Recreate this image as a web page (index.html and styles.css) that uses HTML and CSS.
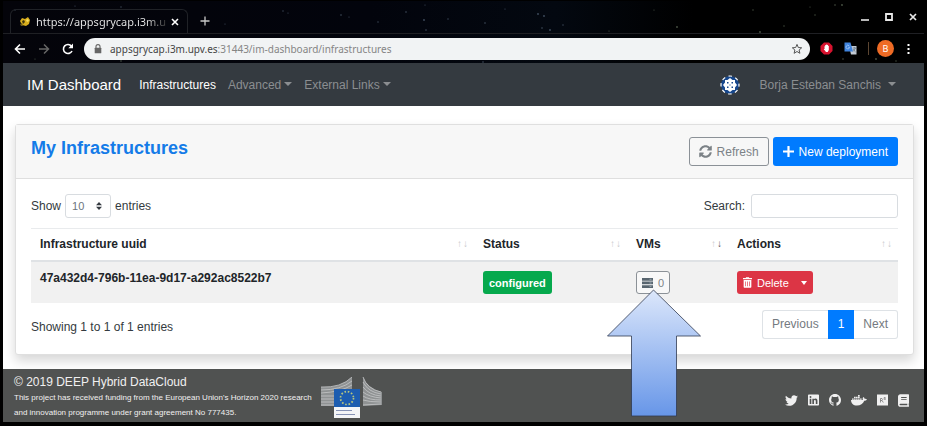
FILE: index.html
```html
<!DOCTYPE html>
<html lang="en">
<head>
<meta charset="utf-8">
<title>IM Dashboard</title>
<link rel="stylesheet" href="styles.css">
</head>
<body>
<div class="window">
  <div class="chrome">
    <svg class="stars" viewBox="0 0 921 62" preserveAspectRatio="none" aria-hidden="true">
      <g fill="#7488a0" opacity=".55">
        <circle cx="12" cy="9" r=".7"/><circle cx="72" cy="5" r=".6"/><circle cx="118" cy="6" r=".7"/><circle cx="222" cy="23" r=".6"/><circle cx="280" cy="10" r=".7"/><circle cx="285" cy="12" r=".6"/><circle cx="338" cy="14" r=".8"/><circle cx="346" cy="16" r=".6"/><circle cx="375" cy="21" r=".7"/><circle cx="403" cy="11" r=".8"/><circle cx="421" cy="19" r=".9"/><circle cx="423" cy="29" r=".8"/><circle cx="422" cy="4" r=".6"/><circle cx="445" cy="18" r=".7"/><circle cx="482" cy="22" r=".8"/><circle cx="502" cy="8" r=".6"/><circle cx="535" cy="13" r=".9"/><circle cx="541" cy="15" r=".9"/><circle cx="539" cy="27" r=".8"/><circle cx="547" cy="29" r=".9"/><circle cx="480" cy="61" r=".8"/><circle cx="560" cy="24" r=".7"/>
      </g>
      <g fill="#72806a" opacity=".65">
        <circle cx="606" cy="30" r=".6"/><circle cx="651" cy="9" r=".6"/><circle cx="674" cy="26" r=".9"/><circle cx="750" cy="9" r=".7"/><circle cx="757" cy="31" r=".9"/><circle cx="781" cy="25" r=".7"/><circle cx="807" cy="6" r=".6"/><circle cx="832" cy="4" r=".8"/><circle cx="839" cy="4" r=".9"/><circle cx="812" cy="14" r=".7"/><circle cx="840" cy="58" r=".8"/><circle cx="873" cy="58" r=".9"/><circle cx="893" cy="60" r=".7"/><circle cx="32" cy="58" r=".6"/><circle cx="118" cy="60" r=".8"/>
      </g>
    </svg>
    <div class="tabs">
      <div class="tab">
        <svg class="favicon" viewBox="0 0 12 12" aria-hidden="true"><path d="M1 5 3 2 6 3 9 1 11 4 10 8 7 10 3 9Z" fill="#d9ae1d"/><path d="M3 5 5 4 6 6 4 8Z" fill="#3f340d"/><path d="M7 4 9 3 10 5 8 6Z" fill="#f7e169"/><path d="M1 8 3 7 4 10 2 10Z" fill="#6b5a18"/></svg>
        <span class="tab-title">https://appsgrycap.i3m.u</span>
        <button class="bare" aria-label="Close tab"><svg width="8" height="8" viewBox="0 0 8 8"><path d="M1 1 7 7M7 1 1 7" stroke="#fff" stroke-width="1.6"/></svg></button>
      </div>
      <button class="bare" aria-label="New tab"><svg width="10" height="10" viewBox="0 0 10 10"><path d="M5 .5V9.500M.5 5H9.500" stroke="#c9c9c9" stroke-width="1.300"/></svg></button>
      <div class="controls">
        <button class="bare" aria-label="Minimize"><svg width="8" height="8" viewBox="0 0 8 8"><path d="M0 7H8" stroke="#e8e8e8" stroke-width="1.600"/></svg></button>
        <button class="bare" aria-label="Maximize"><svg width="8" height="8" viewBox="0 0 8 8"><path d="M1 1H7V7H1Z" fill="none" stroke="#e8e8e8" stroke-width="1.800"/></svg></button>
        <button class="bare" aria-label="Close"><svg width="8" height="8" viewBox="0 0 8 8"><path d="M1 1 7 7M7 1 1 7" stroke="#e8e8e8" stroke-width="1.700"/></svg></button>
      </div>
    </div>
    <div class="toolbar">
      <div class="history">
        <button class="bare" aria-label="Back"><svg width="12" height="12" viewBox="0 0 12 12"><path d="M11 6H2M6 1.500 1.500 6 6 10.500" fill="none" stroke="#fff" stroke-width="1.600"/></svg></button>
        <button class="bare" aria-label="Forward"><svg width="12" height="12" viewBox="0 0 12 12"><path d="M1 6H10M6 1.500 10.500 6 6 10.500" fill="none" stroke="#666" stroke-width="1.500"/></svg></button>
        <button class="bare" aria-label="Reload"><svg width="12" height="12" viewBox="0 0 12 12"><path d="M10 8A4.500 4.500 0 1 1 9.500 3.200" fill="none" stroke="#fff" stroke-width="1.600"/><path d="M11 .5V5.300H6.300Z" fill="#fff"/></svg></button>
      </div>
      <div class="address">
        <svg width="8" height="10" viewBox="0 0 8 10" aria-hidden="true"><path d="M2 4V2.600A2 2 0 0 1 6 2.600V4" fill="none" stroke="#666" stroke-width="1.100"/><rect x=".7" y="3.700" width="6.600" height="5.600" rx=".6" fill="#666"/></svg>
        <span class="url">appsgrycap.i3m.upv.es<span class="path">:31443/im-dashboard/infrastructures</span></span>
        <button class="bare" aria-label="Bookmark"><svg width="12" height="12" viewBox="0 0 12 12"><path d="M6 1.400 7.300 4.500 10.700 4.800 8.100 7 8.900 10.300 6 8.500 3.100 10.300 3.900 7 1.300 4.800 4.700 4.500Z" fill="none" stroke="#555"/></svg></button>
      </div>
      <div class="extensions">
        <svg width="13" height="13" viewBox="0 0 13 13" aria-hidden="true"><path d="M4 .5H9L12.500 4V9L9 12.500H4L.5 9V4Z" fill="#d8132f"/><path d="M4.500 6V4.300h.7V3h1v-.6h1V3h.9v1h.7v4L7.700 10H6L3.800 7.200 4.300 6.600l1 .7Z" fill="#fff"/></svg>
        <svg width="13" height="13" viewBox="0 0 13 13" aria-hidden="true"><path d="M5 4H12.500V12.500H7Z" fill="#c3cbd4"/><path d="M.5 .5H6.500L9 9.500H.5Z" fill="#3f83dd"/><path d="M5.200 3.900A1.800 1.800 0 1 0 5.600 5.300H4.200" fill="none" stroke="#a9cbf5" stroke-width=".8"/><path d="M8.800 6H12M10.400 5.200V6M11.300 6Q10.500 8.500 9 9.500M9.400 7Q10 9 11.600 10" fill="none" stroke="#5f7183" stroke-width=".7"/></svg>
        <span class="divider"></span>
        <span class="avatar">B</span>
        <button class="bare" aria-label="Menu"><svg width="3" height="10" viewBox="0 0 3 10"><path d="M.5 0h2v2h-2ZM.5 4h2v2h-2ZM.5 8h2v2h-2Z" fill="#fff"/></svg></button>
      </div>
    </div>
  </div>

  <nav class="navbar">
    <a class="brand" href="#">IM Dashboard</a>
    <a class="nav-link active" href="#">Infrastructures</a>
    <a class="nav-link caret" href="#">Advanced</a>
    <a class="nav-link caret" href="#">External Links</a>
    <svg class="identicon" viewBox="0 0 20 20" aria-hidden="true"><circle cx="10" cy="10" r="9" fill="#17478c"/><circle cx="10" cy="10" r="9" fill="none" stroke="#fff" stroke-width="1.200" stroke-dasharray="3.500 3.568" stroke-dashoffset="1.750"/><path d="M10 3 12.500 5H15V7.500L17 10 15 12.500V15H12.500L10 17 7.500 15H5V12.500L3 10 5 7.500V5H7.500Z" fill="#fff"/><path d="M7 7h1.500v1.500H7ZM11.500 7H13v1.500h-1.500ZM7 11.500h1.500V13H7ZM11.500 11.500H13V13h-1.500ZM9.500 9.500h1v1h-1Z" fill="#17478c"/></svg>
    <a class="nav-link user caret" href="#">Borja Esteban Sanchis</a>
  </nav>

  <main class="content">
    <section class="card">
      <header class="card-header">
        <h1>My Infrastructures</h1>
        <div class="header-actions">
          <button class="btn outline"><svg width="13" height="13" viewBox="0 0 512 512" aria-hidden="true"><path fill="currentColor" d="M370.700 133.300C339.500 104 298.900 88 255.800 88c-77.500.1-144.300 53.200-162.800 126.900-1.300 5.400-6.100 9.100-11.700 9.100H24.100c-7.500 0-13.200-6.800-11.800-14.200C33.900 94.900 134.800 8 256 8c66.400 0 126.800 26.100 171.300 68.700L463 41c15.100-15.100 41-4.400 41 17v134c0 13.300-10.700 24-24 24H346c-21.400 0-32.100-25.900-17-41zM32 296h134c21.400 0 32.100 25.900 17 41l-41.800 41.800c31.300 29.300 71.800 45.300 114.900 45.200 77.400-.1 144.300-53.200 162.800-126.900 1.300-5.300 6.100-9.100 11.700-9.100h57.300c7.500 0 13.200 6.800 11.800 14.200C478.100 417.100 377.200 504 256 504c-66.400 0-126.800-26.100-171.300-68.700L49 471c-15.100 15.100-41 4.400-41-17V320c0-13.300 10.700-24 24-24z"/></svg>Refresh</button>
          <button class="btn primary"><svg width="11" height="11" viewBox="0 0 11 11" aria-hidden="true"><path d="M5.500 .7V10.300M.7 5.500H10.300" stroke="currentColor" stroke-width="2.200" stroke-linecap="round"/></svg>New deployment</button>
        </div>
      </header>
      <div class="card-body">
        <div class="filters">
          <label class="length">Show
            <span class="select-wrap"><select><option>10</option><option>25</option><option>50</option></select><svg width="6" height="8" viewBox="0 0 6 8" aria-hidden="true"><path d="M0 3.300 3 0 6 3.300ZM0 4.700H6L3 8Z" fill="#343a40"/></svg></span>
            entries</label>
          <label class="search">Search: <input type="search"></label>
        </div>
        <table>
          <colgroup><col><col class="c-status"><col class="c-vms"><col class="c-actions"></colgroup>
          <thead>
            <tr>
              <th scope="col"><div class="th">Infrastructure uuid <span class="sort"><i>↑</i><i>↓</i></span></div></th>
              <th scope="col"><div class="th">Status <span class="sort"><i>↑</i><i>↓</i></span></div></th>
              <th scope="col"><div class="th">VMs <span class="sort"><i>↑</i><i class="on">↓</i></span></div></th>
              <th scope="col"><div class="th">Actions <span class="sort"><i>↑</i><i>↓</i></span></div></th>
            </tr>
          </thead>
          <tbody>
            <tr>
              <td><b>47a432d4-796b-11ea-9d17-a292ac8522b7</b></td>
              <td><span class="btn small success">configured</span></td>
              <td><button class="btn small outline vms"><svg width="11" height="10" viewBox="0 0 11 10" aria-hidden="true"><path d="M0 0H11V2.700H0ZM0 3.600H11V6.300H0ZM0 7.200H11V10H0Z" fill="#58656f"/><path d="M7.500 1.300h2M7.500 5h2M7.500 8.600h2" stroke="#9fb0ba" stroke-width=".8"/></svg>0</button></td>
              <td><div class="group"><button class="btn small danger"><svg width="9" height="11" viewBox="0 0 448 512" aria-hidden="true"><path fill="currentColor" fill-rule="evenodd" d="M432 32H312l-10-19C298 5 290 0 281 0H166c-9 0-17 5-21 13l-9 19H16C7 32 0 39 0 48v48h448V48c0-9-7-16-16-16ZM32 128V464c0 27 21 48 48 48H368c27 0 48-21 48-48V128ZM112 200h32v240h-32ZM208 200h32v240h-32ZM304 200h32v240h-32Z"/></svg>Delete</button><button class="btn small danger toggle caret" aria-label="More actions"></button></div></td>
            </tr>
          </tbody>
        </table>
        <div class="table-foot">
          <span class="info">Showing 1 to 1 of 1 entries</span>
          <div class="pagination"><a href="#">Previous</a><a class="current" href="#">1</a><a href="#">Next</a></div>
        </div>
      </div>
    </section>
  </main>

  <footer class="footer">
    <div class="legal">
      <div class="copyright">© 2019 DEEP Hybrid DataCloud</div>
      <p>This project has received funding from the European Union's Horizon 2020 research and innovation programme under grant agreement No 777435.</p>
    </div>
    <svg class="ec-logo" viewBox="0 0 61 41" aria-hidden="true">
      <path d="M0 10Q20 11 31 0V12H14V29H0Z" fill="#8f9293"/>
      <path d="M42 0Q46 11 61 15V28L42 29Z" fill="#8f9293"/>
      <g fill="none" stroke="#c5c7c8" stroke-width=".8"><path d="M0 10Q20 11 31 0M0 13Q20 13 31 4M0 16Q20 15 31 8M0 19H14M0 22H14M0 25H14M0 28H14"/><path d="M42 0Q46 12 60 15M42 5Q47 15 60 17M42 10Q48 18 60 19M42 15Q48 20 60 21M42 19Q48 23 60 23M42 23Q48 25 60 25M42 28 60 27"/></g>
      <path d="M13 12H39V30H13Z" fill="#1d5db0"/><path d="M13 30H39V41H13Z" fill="#f4f5f7"/>
      <circle cx="26" cy="21" r="6.500" fill="none" stroke="#b8c77e" stroke-width="1.700" stroke-dasharray="1.600 1.803"/>
      <path d="M15 33.500H31M15 37.500H34" stroke="#8793b5" stroke-width="1.200"/>
    </svg>
    <div class="social">
      <a href="#" aria-label="Twitter"><svg width="13" height="13" viewBox="0 0 512 512"><path fill="currentColor" d="M459.400 151.700c.3 4.500.3 9.100.3 13.600 0 138.700-105.600 298.600-298.600 298.600-59.500 0-114.700-17.200-161.100-47.100 8.400 1 16.600 1.300 25.300 1.300 49.100 0 94.200-16.600 130.300-44.800-46.100-1-84.800-31.200-98.100-72.800 6.500 1 13 1.600 19.800 1.600 9.400 0 18.800-1.300 27.600-3.600-48.100-9.700-84.100-52-84.100-103v-1.300c14 7.800 30.200 12.700 47.400 13.300-28.300-18.800-46.800-51-46.800-87.400 0-19.500 5.200-37.400 14.300-53 51.700 63.700 129.300 105.300 216.400 109.800-1.600-7.800-2.600-15.900-2.600-24 0-57.800 46.800-104.900 104.900-104.900 30.200 0 57.500 12.700 76.700 33.100 23.700-4.500 46.500-13.300 66.600-25.300-7.800 24.400-24.400 44.800-46.100 57.800 21.100-2.300 41.600-8.100 60.400-16.200-14.300 20.800-32.200 39.300-52.600 54.300z"/></svg></a>
      <a href="#" aria-label="LinkedIn"><svg width="11" height="12" viewBox="0 0 448 448"><path fill="currentColor" fill-rule="evenodd" d="M416 0H32C14 0 0 14 0 32V416c0 18 14 32 32 32H416c18 0 32-14 32-32V32C448 14 434 0 416 0ZM135 384H69V170H135ZM102 141a38 38 0 1 1 0-77 38 38 0 0 1 0 77ZM384 384H318V280c0-25 0-57-35-57s-40 27-40 55V384H177V170h64v29h1c9-17 31-35 63-35 67 0 79 45 79 103Z"/></svg></a>
      <a href="#" aria-label="GitHub"><svg width="12" height="12" viewBox="0 0 16 16"><path fill="currentColor" d="M8 0C3.580 0 0 3.580 0 8c0 3.540 2.290 6.530 5.470 7.590.4.070.55-.17.55-.38 0-.19-.01-.82-.01-1.490-2.010.37-2.530-.49-2.690-.94-.09-.23-.48-.94-.82-1.130-.28-.15-.68-.52-.01-.53.63-.01 1.080.58 1.230.82.72 1.210 1.870.87 2.330.66.07-.52.28-.87.51-1.070-1.780-.2-3.640-.89-3.640-3.950 0-.87.31-1.590.82-2.150-.08-.2-.36-1.020.08-2.120 0 0 .67-.21 2.200.82a7.600 7.600 0 0 1 4 0c1.530-1.040 2.200-.82 2.200-.82.44 1.100.16 1.920.08 2.120.51.56.82 1.270.82 2.150 0 3.070-1.870 3.750-3.650 3.950.29.25.54.73.54 1.480 0 1.070-.01 1.930-.01 2.200 0 .21.15.46.55.38A8 8 0 0 0 16 8c0-4.420-3.580-8-8-8Z"/></svg></a>
      <a href="#" aria-label="Docker"><svg width="16" height="12" viewBox="0 0 16 12"><path fill="currentColor" d="M0 6H11.800Q11.300 4 12.200 2.900 13.600 3.600 13.600 4.800 15 4.500 16 5.200 15.300 6.800 13.300 6.800C12 10 9.500 11.500 6 11.500 2.200 11.500.1 9.500 0 6ZM1 4.500h1.700v1.300H1ZM3 4.500h1.700v1.300H3ZM5 4.500h1.700v1.300H5ZM7 4.500h1.700v1.300H7ZM9 4.500h1.700v1.300H9ZM3 2.800h1.700v1.300H3ZM5 2.800h1.700v1.300H5ZM7 2.800h1.700v1.300H7ZM7 1h1.700v1.400H7Z"/></svg></a>
      <a href="#" aria-label="ResearchGate"><svg width="11" height="12" viewBox="0 0 11 12"><path fill="currentColor" d="M0 .5H11V11.500H0Z"/><path d="M3.500 8.500V4.500H5Q6.200 5.500 5 6.500H3.500M5 6.500 6.300 8.500M8.500 3.500H7.200V5.300H8.500V4.500" fill="none" stroke="#777" stroke-width=".8"/></svg></a>
      <a href="#" aria-label="Documentation"><svg width="11" height="13" viewBox="0 0 448 512"><path fill="currentColor" fill-rule="evenodd" d="M448 360V24c0-13-11-24-24-24H96C43 0 0 43 0 96V416c0 53 43 96 96 96H424c13 0 24-11 24-24V472c0-8-4-14-9-19-4-15-4-59 0-74 5-4 9-11 9-19ZM128 118h224v32H128ZM128 194h224v32H128ZM381 448H96c-42 0-42-64 0-64H381c-2 17-2 47 0 64Z"/></svg></a>
    </div>
  </footer>

  <svg class="pointer" viewBox="0 0 96 128" aria-hidden="true">
    <defs><linearGradient id="fade" x1="0" y1="0" x2="0" y2="1"><stop offset="0" stop-color="#dce7fb"/><stop offset="1" stop-color="#6796e8"/></linearGradient></defs>
    <path d="M47.500 1 94.500 47H70.500V127H25.500V47H1.500Z" fill="url(#fade)" stroke="#303a50" stroke-width=".8"/>
  </svg>
</div>
</body>
</html>
```
FILE: styles.css
```css
* { box-sizing: border-box; }

body {
  margin: 0;
  color: #343a40;
  font: 12px/18px "Liberation Sans", Arial, sans-serif;
}

a { color: inherit; text-decoration: none; }
button, input, select { font: inherit; }
svg { flex: none; display: block; }

.window {
  position: relative;
  display: flex;
  flex-direction: column;
  min-height: 100vh;
  border: solid #000;
  border-width: 1px 3px 4px;
  background: #fff;
}

/* Browser frame */
.chrome {
  position: relative;
  background: linear-gradient(90deg, #04040a, #02040c 40%, #030810 60%, #000 75%);
  font-family: "Noto Sans", sans-serif;
}
.stars { position: absolute; inset: 0; width: 100%; height: 100%; }
.bare { display: flex; padding: 0; border: 0; background: none; }

.tabs {
  position: relative;
  display: flex;
  align-items: center;
  gap: 12px;
  height: 33px;
  padding: 8px 7px 0 7px;
  border-bottom: 1px solid #1f2024;
}
.tab {
  display: flex;
  align-items: center;
  align-self: stretch;
  gap: 5px;
  padding: 0 8px;
  border: 1px solid #202227;
  border-bottom: 0;
  border-radius: 6px 6px 0 0;
}
.favicon { width: 12px; height: 12px; }
.tab-title {
  color: transparent;
  background: linear-gradient(90deg, #eee 85%, #333) text;
  font-size: 11px;
  white-space: nowrap;
}
.controls { display: flex; gap: 16px; margin: 0 0 8px auto; }

.toolbar {
  position: relative;
  display: flex;
  align-items: center;
  height: 29px;
  padding: 0 14px 0 11px;
}
.history { display: flex; gap: 12px; margin-right: 10px; }
.address {
  display: flex;
  flex: 1;
  align-items: center;
  gap: 8px;
  height: 22px;
  padding: 0 7px 0 10px;
  border-radius: 11px;
  background: #f1f3f4;
}
.url { flex: 1; color: #444; font-size: 10px; white-space: nowrap; }
.path { color: #858585; }
.extensions { display: flex; align-items: center; gap: 11px; margin-left: 10px; }
.divider { width: 1px; height: 13px; background: #5c4632; }
.avatar {
  width: 17px;
  margin: 0 2px 0 -3px;
  border-radius: 50%;
  background: #ee6b25;
  color: #fff;
  font-size: 9px;
  line-height: 17px;
  text-align: center;
}

/* Navigation */
.navbar {
  display: flex;
  align-items: center;
  gap: 12px;
  height: 43px;
  padding: 0 28px 0 24px;
  background: #343a40;
}
.brand { margin-right: 6px; color: #fff; font-size: 15px; }
.nav-link { color: #8b8e91; white-space: nowrap; }
.nav-link.active { color: #fff; }
.caret::after {
  content: "";
  display: inline-block;
  margin-left: 3px;
  border: solid transparent;
  border-width: 4px 4px 0;
  border-top-color: currentColor;
  vertical-align: 3px;
}
.identicon { width: 20px; height: 20px; margin: 0 8px 0 auto; }
.user::after { margin-left: 7px; }

/* Card */
.content { flex: 1; padding: 18px 10px 14px 12px; }
.card {
  border: 1px solid #dfdfdf;
  border-radius: 3px;
  background: #fff;
  box-shadow: 0 6px 12px rgba(0, 0, 0, .16);
}
.card-header {
  display: flex;
  align-items: flex-start;
  justify-content: space-between;
  padding: 12px 15px;
  border-bottom: 1px solid #dfdfdf;
  background: #f7f7f7;
}
h1 { margin: 0; color: #147be8; font-size: 18px; line-height: 22px; }
.header-actions { display: flex; gap: 4px; }

.btn {
  display: inline-flex;
  align-items: center;
  gap: 5px;
  height: 29px;
  padding: 0 9px;
  border: 1px solid transparent;
  border-radius: 3px;
  color: #fff;
  white-space: nowrap;
}
.outline { border-color: #8b9197; background: transparent; color: #7c8287; }
.primary { background: #007bff; }
.small { height: 23px; padding: 0 5px; font-size: 11px; }
.success { background: #06a94d; font-weight: bold; }
.danger { background: #dc3545; }
.vms { background: #f8f8f8; }
.group { display: flex; }
.group .btn:first-child { border-radius: 3px 0 0 3px; }
.group .toggle { border-radius: 0 3px 3px 0; }
.toggle { gap: 0; }
.toggle::after { margin: 0; border-width: 4px 3px 0; }

.card-body { padding: 15px; }
.filters { display: flex; justify-content: space-between; margin-bottom: 10px; }
.length, .search { display: flex; align-items: center; gap: 4px; }
.search { gap: 6px; }
.select-wrap { position: relative; }
.select-wrap svg { position: absolute; top: 8px; right: 9px; pointer-events: none; }
select, input {
  display: block;
  height: 24px;
  border: 1px solid #d8dce0;
  border-radius: 3px;
  background: #fff;
  color: #6c757d;
  font-size: 11px;
}
select { width: 46px; padding: 0 6px; appearance: none; }
input { width: 147px; }

table { width: 100%; table-layout: fixed; border-collapse: collapse; }
.c-status { width: 153px; }
.c-vms { width: 101px; }
.c-actions { width: 170px; }
th, td { padding: 9px; text-align: left; vertical-align: top; }
th { padding: 6px 5px 7px 9px; border-top: 1px solid #e9ebed; border-bottom: 2px solid #dfe2e5; color: #212529; }
td { background: #f1f1f1; color: #212529; }
td b { display: block; line-height: 14px; }
td .btn { vertical-align: top; }
.th { display: flex; justify-content: space-between; }
.sort { display: flex; color: #c6c8ca; font-size: 10px; font-weight: normal; }
.sort i { width: 6px; font-style: normal; }
.sort .on { color: #555; }

.table-foot { display: flex; justify-content: space-between; padding-top: 7px; }
.info { padding-top: 8px; }
.pagination { display: flex; color: #747a80; line-height: 17px; }
.pagination a { padding: 5px 9px; border: 1px solid #dee2e6; }
.pagination a:first-child { border-right: 0; border-radius: 3px 0 0 3px; }
.pagination a:last-child { border-left: 0; border-radius: 0 3px 3px 0; }
.pagination .current { border-color: #007bff; background: #007bff; color: #fff; }

/* Footer */
.footer {
  display: flex;
  align-items: center;
  padding: 5px 15px 2px 11px;
  background: #505251;
  color: #f0f0f0;
}
.legal { width: 302px; }
.copyright { line-height: 16px; }
.legal p { margin: 0; font-size: 8px; line-height: 15px; }
.ec-logo { width: 61px; height: 41px; margin-left: 5px; }
.social { display: flex; align-items: center; gap: 10px; margin: 6px 0 0 auto; }

/* Callout over the VMs button */
.pointer { position: absolute; top: 288px; left: 66%; width: 96px; height: 128px; margin-left: -5px; }
```
